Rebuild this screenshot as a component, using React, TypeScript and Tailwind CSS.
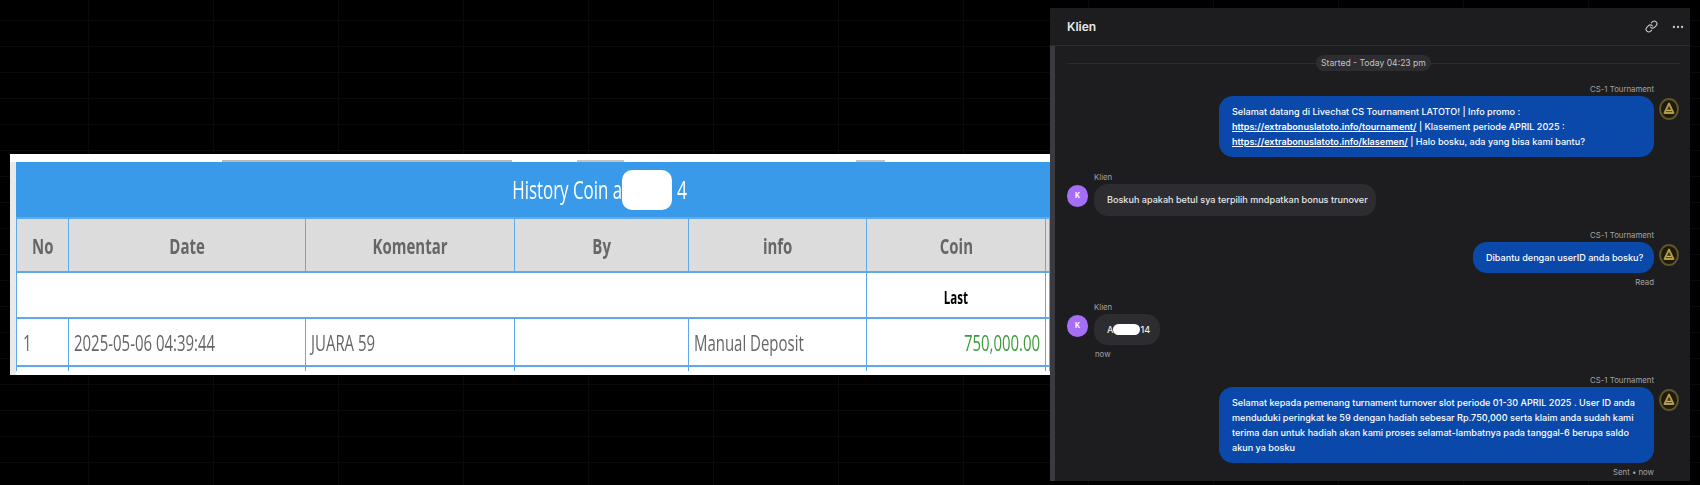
import { Ellipsis, Link } from "lucide-react"

const inter = "font-['Inter',sans-serif]"

function AgentAvatar() {
  return (
    <svg width="20" height="22" viewBox="0 0 20 22" className="shrink-0 ml-[5px] mt-[15px]">
      <ellipse cx="10" cy="11" rx="9" ry="10" fill="#1f1b0c" stroke="#5f552a" strokeWidth="2" />
      <path d="M10 5.5 L14.5 15 L5.5 15 Z" fill="#3a3216" stroke="#b39a4c" strokeWidth="1.8" strokeLinejoin="round" />
      <path d="M7.5 12.5 H12.5" stroke="#d2b85f" strokeWidth="1.4" />
    </svg>
  )
}

function AgentMessage({ children, width, footer }: { children: React.ReactNode; width: string; footer?: string }) {
  return (
    <div className="flex justify-end pr-[11px]">
      <div className="flex flex-col items-end">
        <div className="h-[13px] leading-[13px] text-[7.8px] text-[#a2a2a8]">CS-1 Tournament</div>
        <div className={`${width} bg-[#0a49aa] rounded-[14px] px-[13px] py-[8px] text-[9.1px] font-medium leading-[15px] text-white`}>
          {children}
        </div>
        {footer && <div className="h-[12px] leading-[12px] mt-[3px] text-[7.8px] text-[#a2a2a8]">{footer}</div>}
      </div>
      <AgentAvatar />
    </div>
  )
}

function ClientMessage({ children, time }: { children: React.ReactNode; time?: string }) {
  return (
    <div className="flex pl-[12px]">
      <div className="w-[21px] h-[22px] mt-[14px] mr-[6px] shrink-0 rounded-full bg-[#a56ef7] flex items-center justify-center text-[7px] font-bold text-white">
        K
      </div>
      <div className="flex flex-col items-start">
        <div className="h-[13px] leading-[13px] text-[7.8px] text-[#a2a2a8]">Klien</div>
        {children}
        {time && <div className="h-[12px] leading-[12px] mt-[3px] pl-[1px] text-[7.8px] text-[#a2a2a8]">{time}</div>}
      </div>
    </div>
  )
}

function Narrow({ origin, children }: { origin: string; children: React.ReactNode }) {
  return <span className={`inline-block whitespace-nowrap scale-x-[0.68] ${origin}`}>{children}</span>
}

const border = "border-x border-y-2 border-[#5fa9ea]"

function CoinTable() {
  return (
    <table className="table-fixed border-collapse w-[1033px] font-['Open_Sans',sans-serif]">
      <colgroup>
        <col className="w-[52px]" />
        <col className="w-[237px]" />
        <col className="w-[209px]" />
        <col className="w-[174px]" />
        <col className="w-[178px]" />
        <col className="w-[179px]" />
        <col className="w-[4px]" />
      </colgroup>
      <tbody>
        <tr>
          <th colSpan={7} className="h-[56px] p-0 bg-[#399aea] text-white text-[26px] font-normal">
            <div className="flex items-center">
              <div className="w-[606px] text-right">
                <span className="inline-block whitespace-nowrap scale-x-[0.65] origin-right">History Coin a</span>
              </div>
              <span className="w-[50px] h-[40px] bg-white rounded-[10px]" />
              <span className="ml-[5px]">
                <Narrow origin="origin-left">4</Narrow>
              </span>
            </div>
          </th>
        </tr>
        <tr className="h-[54px] bg-[#dcdcdc] text-[#666] text-[22px]">
          {["No", "Date", "Komentar", "By", "info", "Coin"].map((h) => (
            <th key={h} className={`${border} p-0 font-bold text-center`}>
              <Narrow origin="origin-center">{h}</Narrow>
            </th>
          ))}
          <th className={`${border} p-0`} />
        </tr>
        <tr className="h-[46px] bg-white">
          <td colSpan={5} className={`${border} p-0`} />
          <td className={`${border} p-0 pt-[5px] text-center text-[17px] font-bold text-black`}>
            <Narrow origin="origin-center">Last</Narrow>
          </td>
          <td className={`${border} p-0`} />
        </tr>
        <tr className="h-[48px] bg-white text-[#666] text-[22px]">
          <td className={`${border} p-0 pl-[6px]`}>
            <Narrow origin="origin-left">1</Narrow>
          </td>
          <td className={`${border} p-0 pl-[5px]`}>
            <Narrow origin="origin-left">2025-05-06 04:39:44</Narrow>
          </td>
          <td className={`${border} p-0 pl-[5px]`}>
            <Narrow origin="origin-left">JUARA 59</Narrow>
          </td>
          <td className={`${border} p-0`} />
          <td className={`${border} p-0 pl-[5px]`}>
            <Narrow origin="origin-left">Manual Deposit</Narrow>
          </td>
          <td className={`${border} p-0 pr-[5px] text-right text-[#3f9a3f]`}>
            <Narrow origin="origin-right">750,000.00</Narrow>
          </td>
          <td className={`${border} p-0`} />
        </tr>
        <tr className="h-[5px]">
          {[0, 1, 2, 3, 4, 5, 6].map((i) => (
            <td key={i} className="p-0 border-x border-[#5fa9ea]" />
          ))}
        </tr>
      </tbody>
    </table>
  )
}

export default function App() {
  return (
    <div className="w-[1700px] h-[485px] bg-black bg-[linear-gradient(#0a0a0a_1px,transparent_1px),linear-gradient(90deg,#0a0a0a_1px,transparent_1px)] bg-[size:125px_26px] bg-[position:88px_20px] flex overflow-hidden pl-[10px]">
      {/* screenshot of the coin history */}
      <div className="w-[1040px] h-[221px] mt-[154px] bg-white shrink-0 blur-[0.4px]">
        <div className="h-[8px] flex items-end">
          <div className="w-[212px]" />
          <div className="w-[290px] h-[2px] bg-[#b9b9b9]" />
          <div className="w-[65px]" />
          <div className="w-[47px] h-[2px] bg-[#c4c4c4]" />
          <div className="w-[232px]" />
          <div className="w-[29px] h-[2px] bg-[#c4c4c4]" />
        </div>
        <div className="flex items-start h-[213px]">
          <div className="w-[7px] h-full bg-[#e9e9e9]" />
          <CoinTable />
        </div>
      </div>

      {/* chat panel */}
      <div className={`w-[640px] h-[473px] mt-[8px] shrink-0 bg-[#1d1d20] flex flex-col ${inter}`}>
        <div className="h-[38px] shrink-0 border-b border-[#2c2c30] flex items-center pl-[17px] pr-[5px] text-[#e8e8e8]">
          <span className="text-[12px] font-semibold">Klien</span>
          <Link className="w-[13px] h-[13px] ml-auto text-[#c8c8c8]" />
          <Ellipsis className="w-[14px] h-[14px] ml-[13px] text-[#c8c8c8]" />
        </div>
        <div className="flex-1 border-l-[5px] border-[#3a3a40] flex flex-col">
          <div className="flex items-center pl-[12px] pr-[10px] mt-[9px] mb-[12px]">
            <div className="flex-1 h-px bg-[#2c2c30]" />
            <div className="w-[115px] h-[16px] rounded-full bg-[#2c2c31] text-center text-[8.6px] leading-[16px] whitespace-nowrap text-[#c4c4c4]">
              Started - Today 04:23 pm
            </div>
            <div className="flex-1 h-px bg-[#2c2c30]" />
          </div>

          <AgentMessage width="w-[435px]">
            Selamat datang di Livechat CS Tournament LATOTO! | Info promo :<br />
            <a className="font-semibold underline">https://extrabonuslatoto.info/tournament/</a> | Klasement periode APRIL 2025 :<br />
            <a className="font-semibold underline">https://extrabonuslatoto.info/klasemen/</a> | Halo bosku, ada yang bisa kami bantu?
          </AgentMessage>

          <div className="mt-[14px]">
            <ClientMessage>
              <div className="h-[32px] w-[282px] rounded-[14px] bg-[#2c2c31] px-[13px] flex items-center whitespace-nowrap text-[9.1px] font-medium text-[#e8e8e8]">
                Boskuh apakah betul sya terpilih mndpatkan bonus trunover
              </div>
            </ClientMessage>
          </div>

          <div className="mt-[13px]">
            <AgentMessage width="w-[181px] whitespace-nowrap" footer="Read">
              Dibantu dengan userID anda bosku?
            </AgentMessage>
          </div>

          <div className="mt-[13px]">
            <ClientMessage time="now">
              <div className="h-[31px] w-[66px] rounded-[14px] bg-[#2c2c31] pl-[13px] flex items-center text-[9.1px] font-medium text-[#e8e8e8]">
                A
                <span className="w-[27px] h-[11px] rounded-full bg-white" />
                14
              </div>
            </ClientMessage>
          </div>

          <div className="mt-[14px]">
            <AgentMessage width="w-[435px]" footer="Sent • now">
              Selamat kepada pemenang turnament turnover slot periode 01-30 APRIL 2025 . User ID anda menduduki peringkat ke 59 dengan hadiah sebesar Rp.750,000 serta klaim anda sudah kami terima dan untuk hadiah akan kami proses selamat-lambatnya pada tanggal-6 berupa saldo akun ya bosku
            </AgentMessage>
          </div>
        </div>
      </div>
    </div>
  )
}
